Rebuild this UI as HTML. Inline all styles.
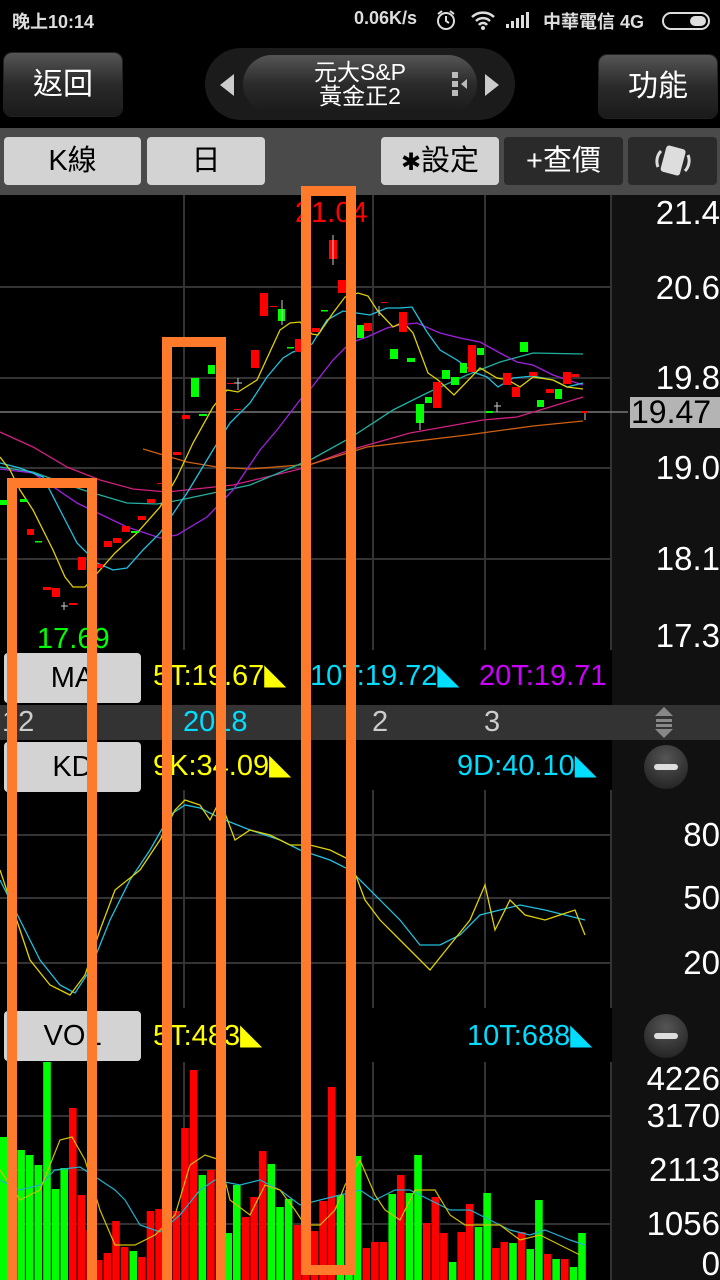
<!DOCTYPE html>
<html><head><meta charset="utf-8"><style>
*{margin:0;padding:0;box-sizing:border-box}
html{width:720px;height:1280px;overflow:hidden}
body{width:720px;height:1280px;background:#000;position:relative;overflow:hidden;font-family:"Liberation Sans","Noto Sans CJK TC",sans-serif}
.a{position:absolute}
.st{color:#ddd;font-size:18px;font-weight:bold;top:8px}
.hb{border-radius:8px;background:linear-gradient(#555,#2a2a2a 50%,#1a1a1a);color:#fff;font-size:30px;text-align:center;box-shadow:0 0 0 1px #222}
.lb{background:#d3d3d3;border-radius:4px;color:#000;font-size:29px;text-align:center}
.db{background:#2a2a2a;border-radius:4px;color:#fff;font-size:29px;text-align:center}
.t{font-size:29px;white-space:nowrap}
.r{color:#fff;font-size:33px;right:0;text-align:right}
</style></head><body>
<div style="position:absolute;left:0;top:0;width:720px;height:1280px;overflow:hidden">
<div class="a st" style="left:12px">晚上10:14</div>
<div class="a st" style="left:354px">0.06K/s</div>
<svg class="a" style="left:434px;top:9px" width="24" height="22" viewBox="0 0 24 22"><circle cx="12" cy="12" r="8" fill="none" stroke="#ddd" stroke-width="2"/><path d="M12 7v5l3 2M4 5l4-3M20 5l-4-3" stroke="#ddd" stroke-width="2" fill="none"/></svg>
<svg class="a" style="left:470px;top:10px" width="26" height="20" viewBox="0 0 26 20"><path d="M2 7a16 16 0 0 1 22 0M6 11a10 10 0 0 1 14 0M9 15a5 5 0 0 1 8 0" stroke="#ddd" stroke-width="2.5" fill="none"/><circle cx="13" cy="18" r="2" fill="#ddd"/></svg>
<svg class="a" style="left:506px;top:12px" width="26" height="16"><rect x="0" y="12" width="3" height="4" fill="#ddd"/><rect x="5" y="9" width="3" height="7" fill="#ddd"/><rect x="10" y="6" width="3" height="10" fill="#ddd"/><rect x="15" y="3" width="3" height="13" fill="#ddd"/><rect x="20" y="0" width="3" height="16" fill="#ddd"/></svg>
<div class="a st" style="left:543px">中華電信 4G</div>
<div class="a" style="left:662px;top:12px;width:48px;height:18px;border:2px solid #ddd;border-radius:9px"><div style="position:absolute;right:2px;top:2px;width:16px;height:10px;background:#ddd;border-radius:5px"></div></div>

<div class="a hb" style="left:4px;top:53px;width:118px;height:63px;line-height:63px">返回</div>
<div class="a" style="left:205px;top:48px;width:310px;height:72px;border-radius:36px;background:#1b1b1b"></div>
<div class="a" style="left:243px;top:55px;width:234px;height:58px;border-radius:29px;background:linear-gradient(#555,#2b2b2b 50%,#1a1a1a);color:#fff;font-size:23px;line-height:24px;text-align:center;padding-top:5px">元大S&amp;P<br>黃金正2</div>
<div class="a" style="left:220px;top:74px;width:0;height:0;border-top:11px solid transparent;border-bottom:11px solid transparent;border-right:14px solid #ccc"></div>
<div class="a" style="left:485px;top:74px;width:0;height:0;border-top:11px solid transparent;border-bottom:11px solid transparent;border-left:14px solid #ccc"></div>
<div class="a" style="left:452px;top:72px;width:6px;height:24px;background:repeating-linear-gradient(#bbb 0 6px,transparent 6px 9px)"></div>
<div class="a" style="left:461px;top:79px;width:0;height:0;border-top:5px solid transparent;border-bottom:5px solid transparent;border-right:6px solid #bbb"></div>
<div class="a hb" style="left:599px;top:55px;width:118px;height:63px;line-height:63px">功能</div>

<div class="a" style="left:0;top:128px;width:720px;height:67px;background:#4a4a4a"></div>
<div class="a lb" style="left:4px;top:137px;width:137px;height:48px;line-height:48px">K線</div>
<div class="a lb" style="left:147px;top:137px;width:118px;height:48px;line-height:48px">日</div>
<div class="a lb" style="left:381px;top:137px;width:118px;height:48px;line-height:48px"><span style="font-size:24px">✱</span>設定</div>
<div class="a db" style="left:504px;top:137px;width:119px;height:48px;line-height:48px">+查價</div>
<div class="a db" style="left:628px;top:137px;width:89px;height:48px"><svg width="89" height="48"><rect x="35" y="10" width="20" height="27" rx="3" fill="#ddd" transform="rotate(15 45 24)"/><path d="M30 30a15 15 0 0 1 3-16M60 18a15 15 0 0 1-3 16" stroke="#ddd" stroke-width="3" fill="none"/></svg></div>

<div class="a" style="left:612px;top:195px;width:108px;height:1085px;background:#111"></div>

<svg class="a" style="left:0;top:0" width="720" height="1280">
<g stroke="#333" stroke-width="2">
<line x1="0" y1="287" x2="612" y2="287"/><line x1="0" y1="378" x2="612" y2="378"/><line x1="0" y1="468" x2="612" y2="468"/><line x1="0" y1="559" x2="612" y2="559"/>
<line x1="184" y1="195" x2="184" y2="650"/><line x1="373" y1="195" x2="373" y2="650"/><line x1="485" y1="195" x2="485" y2="650"/><line x1="611" y1="195" x2="611" y2="650"/>
<line x1="0" y1="835" x2="612" y2="835"/><line x1="0" y1="898" x2="612" y2="898"/><line x1="0" y1="963" x2="612" y2="963"/>
<line x1="184" y1="790" x2="184" y2="1008"/><line x1="373" y1="790" x2="373" y2="1008"/><line x1="485" y1="790" x2="485" y2="1008"/><line x1="611" y1="790" x2="611" y2="1008"/>
<line x1="0" y1="1116" x2="612" y2="1116"/><line x1="0" y1="1170" x2="612" y2="1170"/><line x1="0" y1="1224" x2="612" y2="1224"/>
<line x1="184" y1="1062" x2="184" y2="1280"/><line x1="373" y1="1062" x2="373" y2="1280"/><line x1="485" y1="1062" x2="485" y2="1280"/><line x1="611" y1="1062" x2="611" y2="1280"/>
</g>
<line x1="0" y1="412" x2="628" y2="412" stroke="#777" stroke-width="1.5"/>
<g fill="none" stroke-width="1.3">
<polyline stroke="#d02080" points="0,432 33,447 67,467 100,480 133,489 167,492 233,485 300,469 312,464 350,450 410,433 483,420 517,417 550,407 583,397"/>
<polyline stroke="#d06010" points="143,449 187,462 217,467 250,469 300,465 312,464 367,447 467,435 533,426 583,421"/>
<polyline stroke="#20b0a0" points="0,467 33,472 83,490 127,503 157,504 180,500 227,490 250,485 300,464 312,459 350,438 393,410 427,393 467,375 500,362 533,353 583,354"/>
<polyline stroke="#a020e0" points="0,469 33,473 77,503 127,527 160,538 177,535 207,517 233,490 260,450 277,430 300,400 312,387 333,360 350,343 367,337 387,328 400,325 417,323 440,333 460,338 480,342 500,353 517,362 533,365 553,375 577,383 583,385"/>
<polyline stroke="#20c0e0" points="0,463 20,468 43,477 60,510 77,543 97,563 113,570 127,568 143,550 160,533 187,493 213,450 230,423 250,403 267,377 283,358 293,352 300,350 312,344 327,320 343,311 370,315 387,308 400,308 412,307 427,332 440,350 457,360 473,372 487,377 498,387 513,378 533,376 553,380 567,387 583,383"/>
<polyline stroke="#e0d000" points="0,457 10,470 20,490 33,510 53,550 65,577 73,587 85,587 100,570 115,553 137,533 160,507 177,477 193,443 213,407 227,390 238,392 257,380 280,330 290,323 300,322 312,334 318,335 333,313 345,297 358,293 368,296 377,310 393,327 403,322 413,333 428,373 438,380 454,395 480,368 497,378 508,380 520,387 533,377 553,380 567,387 583,389"/>
</g>
<g fill="#f00">
<rect x="27" y="529" width="7" height="6"/><rect x="43" y="587" width="8" height="3"/><rect x="52" y="588" width="8" height="9"/><rect x="69" y="603" width="8" height="2"/><rect x="78" y="557" width="8" height="13"/><rect x="96" y="564" width="7" height="4"/><rect x="104" y="541" width="8" height="6"/><rect x="113" y="538" width="8" height="5"/><rect x="122" y="526" width="8" height="6"/><rect x="138" y="516" width="8" height="4"/><rect x="147" y="499" width="8" height="4"/><rect x="157" y="483" width="6" height="1"/><rect x="173" y="452" width="8" height="3"/><rect x="182" y="415" width="8" height="4"/><rect x="227" y="383" width="7" height="1"/><rect x="234" y="409" width="7" height="1"/><rect x="251" y="350" width="8" height="18"/><rect x="260" y="293" width="8" height="23"/><rect x="270" y="306" width="7" height="1"/><rect x="295" y="339" width="8" height="13"/><rect x="312" y="328" width="8" height="4"/><rect x="329" y="240" width="8" height="19"/><rect x="338" y="280" width="8" height="13"/><rect x="364" y="323" width="8" height="8"/><rect x="381" y="302" width="6" height="1"/><rect x="399" y="312" width="8" height="20"/><rect x="433" y="382" width="8" height="26"/><rect x="468" y="345" width="8" height="27"/><rect x="503" y="373" width="8" height="12"/><rect x="512" y="387" width="8" height="10"/><rect x="529" y="372" width="8" height="4"/><rect x="546" y="389" width="8" height="4"/><rect x="563" y="372" width="8" height="12"/><rect x="572" y="374" width="7" height="3"/><rect x="581" y="411" width="7" height="2"/>
</g>
<g fill="#0f0">
<rect x="0" y="500" width="7" height="5"/><rect x="20" y="499" width="7" height="3"/><rect x="35" y="541" width="7" height="1.5"/><rect x="131" y="531" width="8" height="2"/><rect x="191" y="378" width="8" height="19"/><rect x="199" y="414" width="8" height="2"/><rect x="208" y="365" width="7" height="9"/><rect x="278" y="309" width="7" height="12"/><rect x="287" y="347" width="7" height="1.5"/><rect x="321" y="310" width="7" height="1.5"/><rect x="357" y="325" width="7" height="13"/><rect x="390" y="349" width="8" height="10"/><rect x="407" y="358" width="8" height="4"/><rect x="416" y="404" width="8" height="19"/><rect x="425" y="397" width="7" height="6"/><rect x="442" y="370" width="8" height="9"/><rect x="451" y="377" width="8" height="8"/><rect x="460" y="363" width="7" height="10"/><rect x="477" y="348" width="7" height="7"/><rect x="486" y="411" width="7" height="2"/><rect x="520" y="342" width="8" height="10"/><rect x="537" y="400" width="7" height="7"/><rect x="555" y="389" width="7" height="10"/>
</g>
<g stroke="#ccc" stroke-width="1"><line x1="64" y1="602" x2="64" y2="610"/><line x1="61" y1="606" x2="68" y2="606"/><line x1="238" y1="378" x2="238" y2="390"/><line x1="234" y1="383" x2="242" y2="383"/><line x1="379" y1="306" x2="379" y2="316"/><line x1="497" y1="402" x2="497" y2="412"/><line x1="494" y1="406" x2="501" y2="406"/><line x1="282" y1="300" x2="282" y2="325"/><line x1="333" y1="235" x2="333" y2="265"/><line x1="420" y1="420" x2="420" y2="430"/><line x1="585" y1="413" x2="585" y2="420"/></g>
<text x="295" y="222" fill="#f00" font-size="29" font-family="Liberation Sans">21.04</text>
<text x="37" y="648" fill="#0f0" font-size="29" font-family="Liberation Sans">17.69</text>
<g fill="none" stroke-width="1.3">
<polyline stroke="#20c0e0" points="0,880 20,920 40,960 60,985 75,993 90,970 110,920 130,880 150,850 170,815 185,805 200,808 220,818 250,830 280,840 300,850 330,860 350,870 370,890 400,920 420,945 440,945 460,935 480,915 500,910 520,905 545,910 565,915 585,920"/>
<polyline stroke="#e0d000" points="0,870 10,900 30,960 50,985 70,995 85,975 100,930 115,890 140,870 160,840 175,810 185,800 200,805 210,820 220,800 235,840 250,830 270,835 290,845 310,845 330,850 350,860 365,900 380,920 400,940 420,960 430,970 450,945 470,920 485,885 495,930 510,900 525,915 545,920 560,915 575,910 585,935"/>
</g>
<g fill="#0f0">
<rect x="0" y="1137" width="7.6" height="143"/><rect x="17.3" y="1150" width="7.6" height="130"/><rect x="25.9" y="1155" width="7.6" height="125"/><rect x="34.5" y="1165" width="7.6" height="115"/><rect x="43.2" y="1062" width="7.6" height="218"/><rect x="51.8" y="1189" width="7.6" height="91"/><rect x="60.4" y="1168" width="7.6" height="112"/><rect x="129.5" y="1251" width="7.6" height="29"/><rect x="198.5" y="1175" width="7.6" height="105"/><rect x="215.8" y="1200" width="7.6" height="80"/><rect x="224.4" y="1233" width="7.6" height="47"/><rect x="233" y="1185" width="7.6" height="95"/><rect x="267.5" y="1164" width="7.6" height="116"/><rect x="276.2" y="1207" width="7.6" height="73"/><rect x="284.8" y="1199" width="7.6" height="81"/><rect x="336.6" y="1195" width="7.6" height="85"/><rect x="345.2" y="1190" width="7.6" height="90"/><rect x="353.8" y="1156" width="7.6" height="124"/><rect x="388.4" y="1194" width="7.6" height="86"/><rect x="405.6" y="1193" width="7.6" height="87"/><rect x="414.2" y="1155" width="7.6" height="125"/><rect x="448.8" y="1262" width="7.6" height="18"/><rect x="474.7" y="1227" width="7.6" height="53"/><rect x="483.3" y="1193" width="7.6" height="87"/><rect x="509.2" y="1243" width="7.6" height="37"/><rect x="526.4" y="1249" width="7.6" height="31"/><rect x="535.1" y="1200" width="7.6" height="80"/><rect x="552.3" y="1259" width="7.6" height="21"/><rect x="569.6" y="1267" width="7.6" height="13"/><rect x="578.2" y="1233" width="7.6" height="47"/>
</g>
<g fill="#f00">
<rect x="8.6" y="1253" width="7.6" height="27"/><rect x="69" y="1108" width="7.6" height="172"/><rect x="77.7" y="1195" width="7.6" height="85"/><rect x="86.3" y="1230" width="7.6" height="50"/><rect x="94.9" y="1260" width="7.6" height="20"/><rect x="103.6" y="1253" width="7.6" height="27"/><rect x="112.2" y="1221" width="7.6" height="59"/><rect x="120.8" y="1247" width="7.6" height="33"/><rect x="138.1" y="1257" width="7.6" height="23"/><rect x="146.7" y="1211" width="7.6" height="69"/><rect x="155.3" y="1209" width="7.6" height="71"/><rect x="164" y="1200" width="7.6" height="80"/><rect x="172.6" y="1211" width="7.6" height="69"/><rect x="181.2" y="1128" width="7.6" height="152"/><rect x="189.9" y="1070" width="7.6" height="210"/><rect x="207.1" y="1170" width="7.6" height="110"/><rect x="241.6" y="1217" width="7.6" height="63"/><rect x="250.3" y="1197" width="7.6" height="83"/><rect x="258.9" y="1151" width="7.6" height="129"/><rect x="293.4" y="1225" width="7.6" height="55"/><rect x="302.1" y="1230" width="7.6" height="50"/><rect x="310.7" y="1231" width="7.6" height="49"/><rect x="319.3" y="1201" width="7.6" height="79"/><rect x="327.9" y="1087" width="7.6" height="193"/><rect x="362.5" y="1248" width="7.6" height="32"/><rect x="371.1" y="1242" width="7.6" height="38"/><rect x="379.7" y="1242" width="7.6" height="38"/><rect x="397" y="1175" width="7.6" height="105"/><rect x="422.9" y="1223" width="7.6" height="57"/><rect x="431.5" y="1197" width="7.6" height="83"/><rect x="440.1" y="1233" width="7.6" height="47"/><rect x="457.4" y="1232" width="7.6" height="48"/><rect x="466" y="1204" width="7.6" height="76"/><rect x="491.9" y="1248" width="7.6" height="32"/><rect x="500.5" y="1242" width="7.6" height="38"/><rect x="517.8" y="1232" width="7.6" height="48"/><rect x="543.7" y="1254" width="7.6" height="26"/><rect x="561" y="1259" width="7.6" height="21"/>
</g>
<g fill="none" stroke-width="1.2">
<polyline stroke="#20b0d0" points="0,1180 20,1190 40,1185 55,1170 80,1167 100,1180 115,1190 125,1200 140,1225 160,1232 180,1215 200,1190 215,1180 240,1185 260,1180 280,1190 300,1205 320,1200 340,1195 360,1190 375,1200 395,1190 410,1190 430,1200 450,1210 470,1210 490,1220 510,1230 530,1235 545,1230 570,1240 585,1245"/>
<polyline stroke="#d0c000" points="0,1170 20,1200 40,1190 60,1140 72,1137 85,1160 100,1210 115,1245 135,1245 155,1235 175,1215 190,1165 205,1155 220,1160 230,1200 250,1215 265,1185 280,1190 295,1210 305,1225 320,1225 335,1210 345,1185 360,1160 375,1195 385,1210 400,1220 415,1190 435,1190 450,1215 465,1225 480,1225 500,1225 520,1240 540,1235 560,1245 580,1255"/>
</g>
</svg>

<div class="a" style="left:0;top:650px;width:612px;height:55px;background:#000"></div>
<div class="a lb" style="left:4px;top:653px;width:137px;height:50px;line-height:50px">MA</div>
<div class="a t" style="left:153px;top:660px;color:#ff0">5T:19.67<span style="font-size:22px">◣</span></div>
<div class="a t" style="left:310px;top:660px;color:#0df">10T:19.72<span style="font-size:22px">◣</span></div>
<div class="a t" style="left:479px;top:660px;color:#c0f;width:133px;overflow:hidden">20T:19.71</div>
<div class="a" style="left:0;top:705px;width:720px;height:35px;background:#333"></div>
<div class="a t" style="left:2px;top:706px;color:#ccc">12</div>
<div class="a t" style="left:183px;top:706px;color:#0df">2018</div>
<div class="a t" style="left:372px;top:706px;color:#ccc">2</div>
<div class="a t" style="left:484px;top:706px;color:#ccc">3</div>
<div class="a" style="left:655px;top:707px;width:0;height:0;border-left:9px solid transparent;border-right:9px solid transparent;border-bottom:9px solid #888"></div>
<div class="a" style="left:656px;top:719px;width:16px;height:3px;background:#888;box-shadow:0 5px 0 #888"></div>
<div class="a" style="left:655px;top:729px;width:0;height:0;border-left:9px solid transparent;border-right:9px solid transparent;border-top:9px solid #888"></div>
<div class="a" style="left:0;top:740px;width:612px;height:50px;background:#000"></div>
<div class="a lb" style="left:4px;top:742px;width:137px;height:50px;line-height:50px">KD</div>
<div class="a t" style="left:153px;top:750px;color:#ff0">9K:34.09<span style="font-size:22px">◣</span></div>
<div class="a t" style="left:457px;top:750px;color:#0df">9D:40.10<span style="font-size:22px">◣</span></div>
<div class="a" style="left:644px;top:745px;width:44px;height:44px;border-radius:22px;background:radial-gradient(circle at 50% 30%,#555,#1a1a1a)"><div style="position:absolute;left:10px;top:19px;width:24px;height:6px;border-radius:3px;background:#ddd"></div></div>
<div class="a" style="left:0;top:1008px;width:612px;height:54px;background:#000"></div>
<div class="a lb" style="left:4px;top:1011px;width:137px;height:50px;line-height:50px">VOL</div>
<div class="a t" style="left:153px;top:1020px;color:#ff0">5T:483<span style="font-size:22px">◣</span></div>
<div class="a t" style="left:467px;top:1020px;color:#0df">10T:688<span style="font-size:22px">◣</span></div>
<div class="a" style="left:644px;top:1014px;width:44px;height:44px;border-radius:22px;background:radial-gradient(circle at 50% 30%,#555,#1a1a1a)"><div style="position:absolute;left:10px;top:19px;width:24px;height:6px;border-radius:3px;background:#ddd"></div></div>

<div class="a r" style="top:194px">21.4</div>
<div class="a r" style="top:269px">20.6</div>
<div class="a r" style="top:359px">19.8</div>
<div class="a" style="left:630px;top:397px;width:90px;height:31px;background:#b4b4b4;color:#000;font-size:32px;line-height:31px;padding-left:1px;white-space:nowrap">19.47</div>
<div class="a r" style="top:449px">19.0</div>
<div class="a r" style="top:540px">18.1</div>
<div class="a r" style="top:617px">17.3</div>
<div class="a r" style="top:816px">80</div>
<div class="a r" style="top:879px">50</div>
<div class="a r" style="top:944px">20</div>
<div class="a r" style="top:1060px">4226</div>
<div class="a r" style="top:1097px">3170</div>
<div class="a r" style="top:1151px">2113</div>
<div class="a r" style="top:1205px">1056</div>
<div class="a r" style="top:1245px">0</div>

<div class="a" style="left:7px;top:478px;width:90px;height:812px;border:10px solid #ff7a2a"></div>
<div class="a" style="left:162px;top:337px;width:64px;height:953px;border:10px solid #ff7a2a"></div>
<div class="a" style="left:301px;top:186px;width:55px;height:1089px;border:10px solid #ff7a2a"></div>
</div>
</body></html>
